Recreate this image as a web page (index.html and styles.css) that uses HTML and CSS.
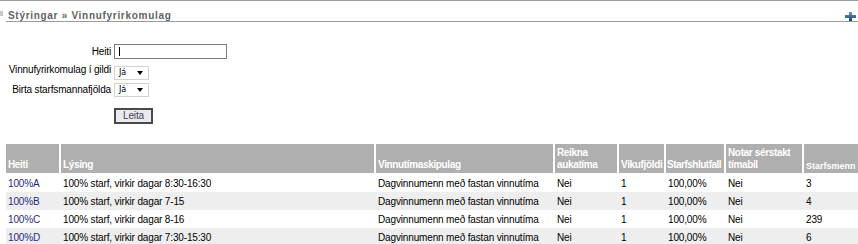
FILE: index.html
```html
<!DOCTYPE html>
<html lang="is">
<head>
<meta charset="utf-8">
<title>Vinnufyrirkomulag</title>
<link rel="stylesheet" href="styles.css">
</head>
<body>
<div class="topline"></div>
<div class="head">
  <span class="edge"></span>
  <div class="titlebar">
    <span class="title">Stýringar » Vinnufyrirkomulag</span>
    <svg class="plus" width="11" height="9" viewBox="0 0 11 9">
      <defs>
        <linearGradient id="pg" x1="0" y1="0" x2="0" y2="1">
          <stop offset="0" stop-color="#6d95c4"/>
          <stop offset="1" stop-color="#1d3f6e"/>
        </linearGradient>
      </defs>
      <path d="M4 0h3v3h4v3H7v3H4V6H0V3h4z" fill="url(#pg)"/>
    </svg>
  </div>
</div>

<form class="search">
  <label class="lbl" for="heiti">Heiti</label>
  <span class="inwrap"><input id="heiti" class="txt" type="text"><span class="caret"></span></span>

  <label class="lbl" for="gildi">Vinnufyrirkomulag í gildi</label>
  <span class="selwrap"><span class="sel">Já</span></span>

  <label class="lbl" for="birta">Birta starfsmannafjölda</label>
  <span class="selwrap"><span class="sel">Já</span></span>

  <span class="lbl"></span>
  <span class="btnrow"><button type="button" class="btn">Leita</button></span>
</form>

<div class="grid">
  <div class="row hrow">
    <div class="th">Heiti</div>
    <div class="th">Lýsing</div>
    <div class="th">Vinnutímaskipulag</div>
    <div class="th">Reikna aukatíma</div>
    <div class="th">Vikufjöldi</div>
    <div class="th tight">Starfshlutfall</div>
    <div class="th">Notar sérstakt tímabil</div>
    <div class="th small">Starfsmenn</div>
  </div>
  <div class="row">
    <div class="td"><a href="#">100%A</a></div>
    <div class="td">100% starf, virkir dagar 8:30-16:30</div>
    <div class="td">Dagvinnumenn með fastan vinnutíma</div>
    <div class="td">Nei</div>
    <div class="td">1</div>
    <div class="td">100,00%</div>
    <div class="td">Nei</div>
    <div class="td">3</div>
  </div>
  <div class="row alt">
    <div class="td"><a href="#">100%B</a></div>
    <div class="td">100% starf, virkir dagar 7-15</div>
    <div class="td">Dagvinnumenn með fastan vinnutíma</div>
    <div class="td">Nei</div>
    <div class="td">1</div>
    <div class="td">100,00%</div>
    <div class="td">Nei</div>
    <div class="td">4</div>
  </div>
  <div class="row">
    <div class="td"><a href="#">100%C</a></div>
    <div class="td">100% starf, virkir dagar 8-16</div>
    <div class="td">Dagvinnumenn með fastan vinnutíma</div>
    <div class="td">Nei</div>
    <div class="td">1</div>
    <div class="td">100,00%</div>
    <div class="td">Nei</div>
    <div class="td">239</div>
  </div>
  <div class="row alt">
    <div class="td"><a href="#">100%D</a></div>
    <div class="td">100% starf, virkir dagar 7:30-15:30</div>
    <div class="td">Dagvinnumenn með fastan vinnutíma</div>
    <div class="td">Nei</div>
    <div class="td">1</div>
    <div class="td">100,00%</div>
    <div class="td">Nei</div>
    <div class="td">6</div>
  </div>
</div>
</body>
</html>
```

FILE: styles.css
```css
html, body {
  margin: 0;
  padding: 0;
  background: #fff;
  overflow: hidden;
}
body {
  width: 858px;
  font-family: "Liberation Sans", Arial, sans-serif;
  font-size: 10px;
  letter-spacing: -0.15px;
  color: #000;
}
.topline {
  height: 1px;
  background: #9a9a9a;
}
.head {
  display: flex;
  height: 22px;
}
.edge {
  width: 3px;
  height: 5px;
  margin-top: 10px;
  margin-right: 3px;
  background: #c8c8c8;
}
.titlebar {
  flex: 1;
  display: flex;
  align-items: flex-start;
  justify-content: space-between;
  border-bottom: 1px solid #9c9c9c;
  height: 20px;
}
.title {
  margin-left: 2px;
  margin-top: 9px;
  font-weight: bold;
  font-size: 10px;
  line-height: 11px;
  letter-spacing: 0.7px;
  color: #626262;
}
.plus {
  margin-top: 11px;
  margin-right: 2px;
}

.search {
  display: grid;
  grid-template-columns: 104px auto;
  column-gap: 3px;
  justify-content: start;
  padding-left: 7px;
  margin-top: 21px;
}
.lbl {
  text-align: right;
  white-space: nowrap;
  line-height: 12px;
  align-self: center;
}
.inwrap {
  position: relative;
  display: block;
  width: 113px;
  height: 15px;
}
.txt {
  box-sizing: border-box;
  width: 113px;
  height: 15px;
  margin: 0;
  padding: 0 3px;
  border: 1px solid #7b7b7b;
  font: 10px "Liberation Sans", Arial, sans-serif;
  outline: none;
  background: #fff;
}
.caret {
  position: absolute;
  left: 5px;
  top: 3px;
  width: 1px;
  height: 9px;
  background: #000;
}
.selwrap {
  position: relative;
  display: block;
  width: 35px;
  height: 14px;
  margin-top: 7px;
}
.selwrap::after {
  content: "";
  position: absolute;
  right: 6px;
  top: 5px;
  border-left: 3px solid transparent;
  border-right: 3px solid transparent;
  border-top: 4px solid #000;
}
.sel {
  display: block;
  box-sizing: border-box;
  width: 35px;
  height: 14px;
  padding: 0 0 0 4px;
  border: 1px solid #d2d2d2;
  background: #fff;
  font: 8px "DejaVu Sans", sans-serif;
  letter-spacing: 0;
  line-height: 12px;
  color: #000;
}
.search label[for="birta"] {
  margin-top: 3px;
}
.search label[for="birta"] + .selwrap {
  margin-top: 3px;
}
.btnrow {
  display: block;
  margin-top: 11px;
}
.btn {
  box-sizing: border-box;
  width: 39px;
  height: 16px;
  margin: 0;
  padding: 0;
  border: 2px solid #4a4a4a;
  background: #e9e9ee;
  font: 10px "Liberation Sans", Arial, sans-serif;
  letter-spacing: -0.15px;
  color: #3d4660;
  line-height: 12px;
}

.grid {
  margin-top: 20px;
  margin-left: 6px;
  width: 880px;
}
.row {
  display: grid;
  grid-template-columns: 53px 313px 177px 62px 45px 58px 76px 70px;
  column-gap: 2px;
  height: 18px;
  background: #fff;
}
.row.alt {
  background: #eeeeee;
}
.hrow {
  height: 29px;
  margin-bottom: 1px;
}
.th {
  background: #afafaf;
  color: #fff;
  font-weight: bold;
  letter-spacing: -0.35px;
  line-height: 12px;
  padding: 0 0 2px 2px;
  display: flex;
  align-items: flex-end;
  white-space: nowrap;
}
.th.tight {
  padding-left: 1px;
  letter-spacing: -0.5px;
}
.th:nth-child(4),
.th:nth-child(7) {
  white-space: normal;
}
.th.small {
  font-size: 9px;
  letter-spacing: 0;
  padding-bottom: 1px;
}
.td {
  padding: 2px 2px 0 2px;
  line-height: 16px;
  white-space: nowrap;
  overflow: hidden;
}
.td a {
  color: #1f2a86;
  text-decoration: none;
}
```
